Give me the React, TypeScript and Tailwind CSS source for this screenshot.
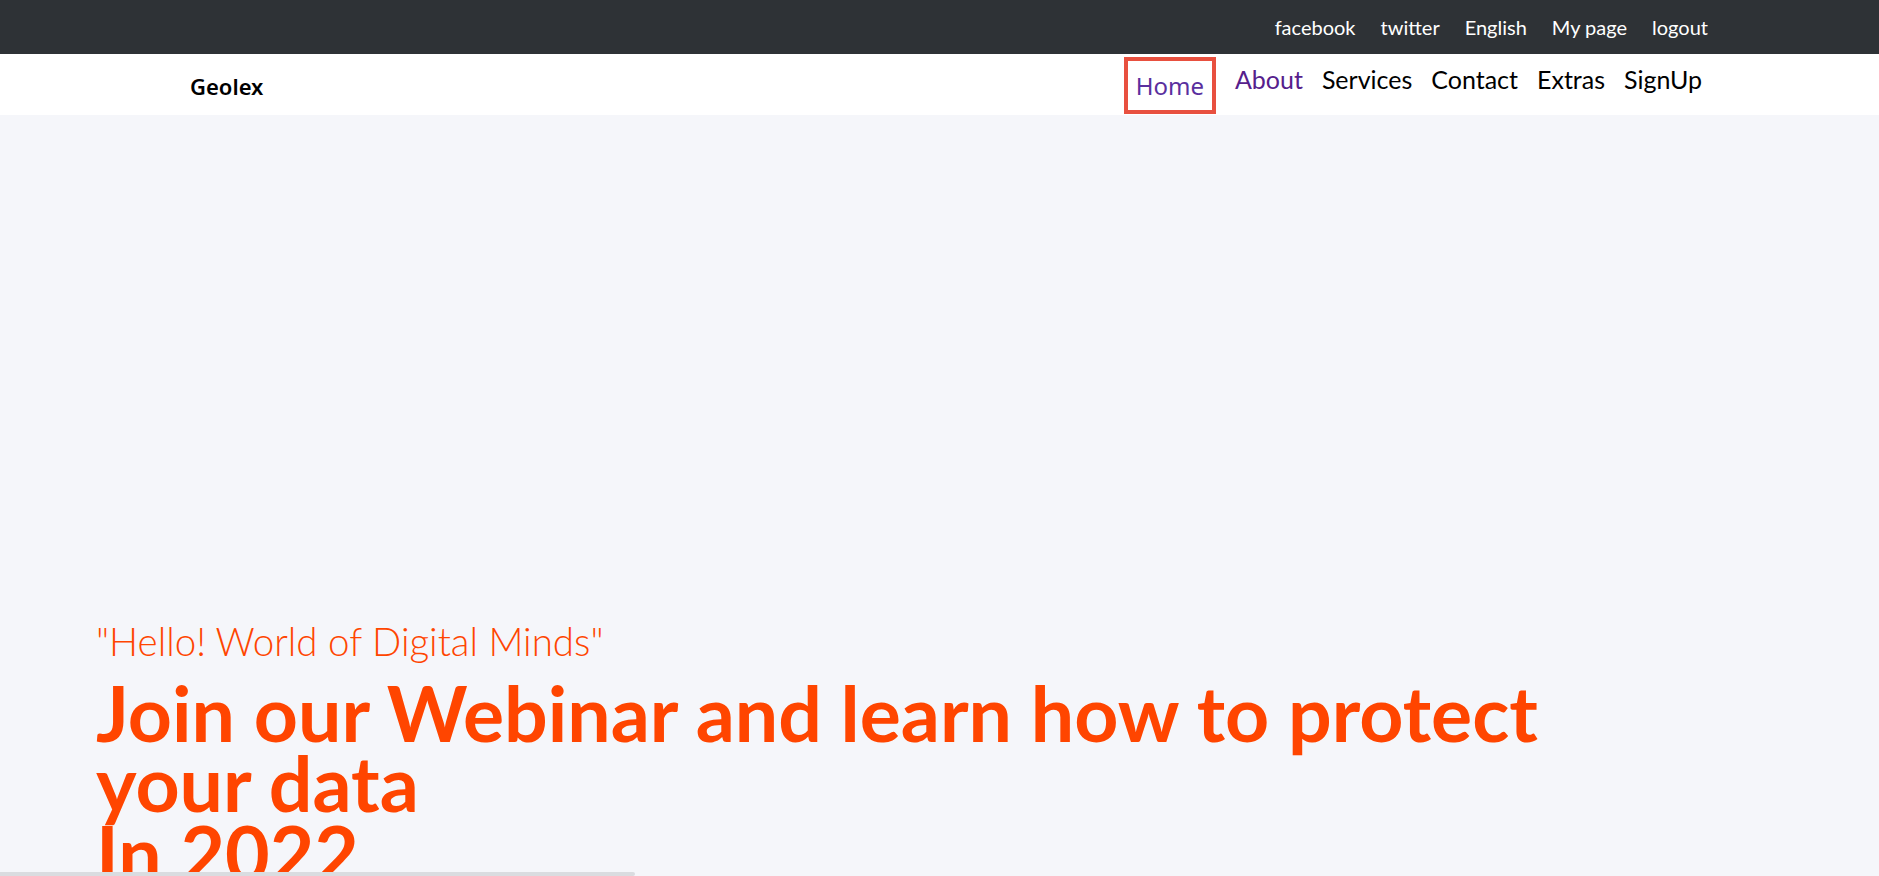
const topLinks = ["facebook", "twitter", "English", "My page", "logout"];
const navLinks = ["About", "Services", "Contact", "Extras", "SignUp"];

export default function App() {
  return (
    <div className="min-h-screen bg-[#f5f6fa] font-['Lato',sans-serif]">
      {/* top strip */}
      <div className="h-[54px] bg-[#2e3236] flex items-center justify-end gap-[25px] pr-[171px] pb-[1px]">
        {topLinks.map((l) => (
          <a key={l} className="text-white text-[20px] leading-none">
            {l}
          </a>
        ))}
      </div>

      {/* nav */}
      <nav className="h-[61px] bg-white flex items-start justify-between pl-[190px] pr-[177px]">
        <span className="mt-[16px] text-[22px] font-semibold text-black font-['Noto_Sans',sans-serif]">
          Geolex
        </span>
        <ul className="flex items-start gap-[19px] pt-[3px]">
          <li className="w-[92px] h-[57px] border-4 border-[#e8503f] flex items-center justify-center pt-[1px]">
            <span className="text-[24px] text-[#5a2f9e] font-['Noto_Sans',sans-serif]">Home</span>
          </li>
          {navLinks.map((l, i) => (
            <li key={l} className={`text-[25px] leading-none pt-[10px] ${i === 0 ? "text-[#56208c]" : "text-black"}`}>
              {l}
            </li>
          ))}
        </ul>
      </nav>

      {/* hero */}
      <section className="pl-[96px] pt-[503px] pb-[200px]">
        <p className="text-[38.5px] leading-[47px] font-light text-[#ff4500]">"Hello! World of Digital Minds"</p>
        <h1 className="mt-[12px] max-w-[1500px] text-[77px] leading-[70px] font-bold text-[#ff4500]">
          Join our Webinar and learn how to protect your data
          <br />
          In 2022
        </h1>
      </section>

      {/* scrollbar thumb */}
      <div className="fixed left-0 bottom-0 w-[635px] h-[4px] rounded-r-full bg-[#dadce0]" />
    </div>
  );
}
